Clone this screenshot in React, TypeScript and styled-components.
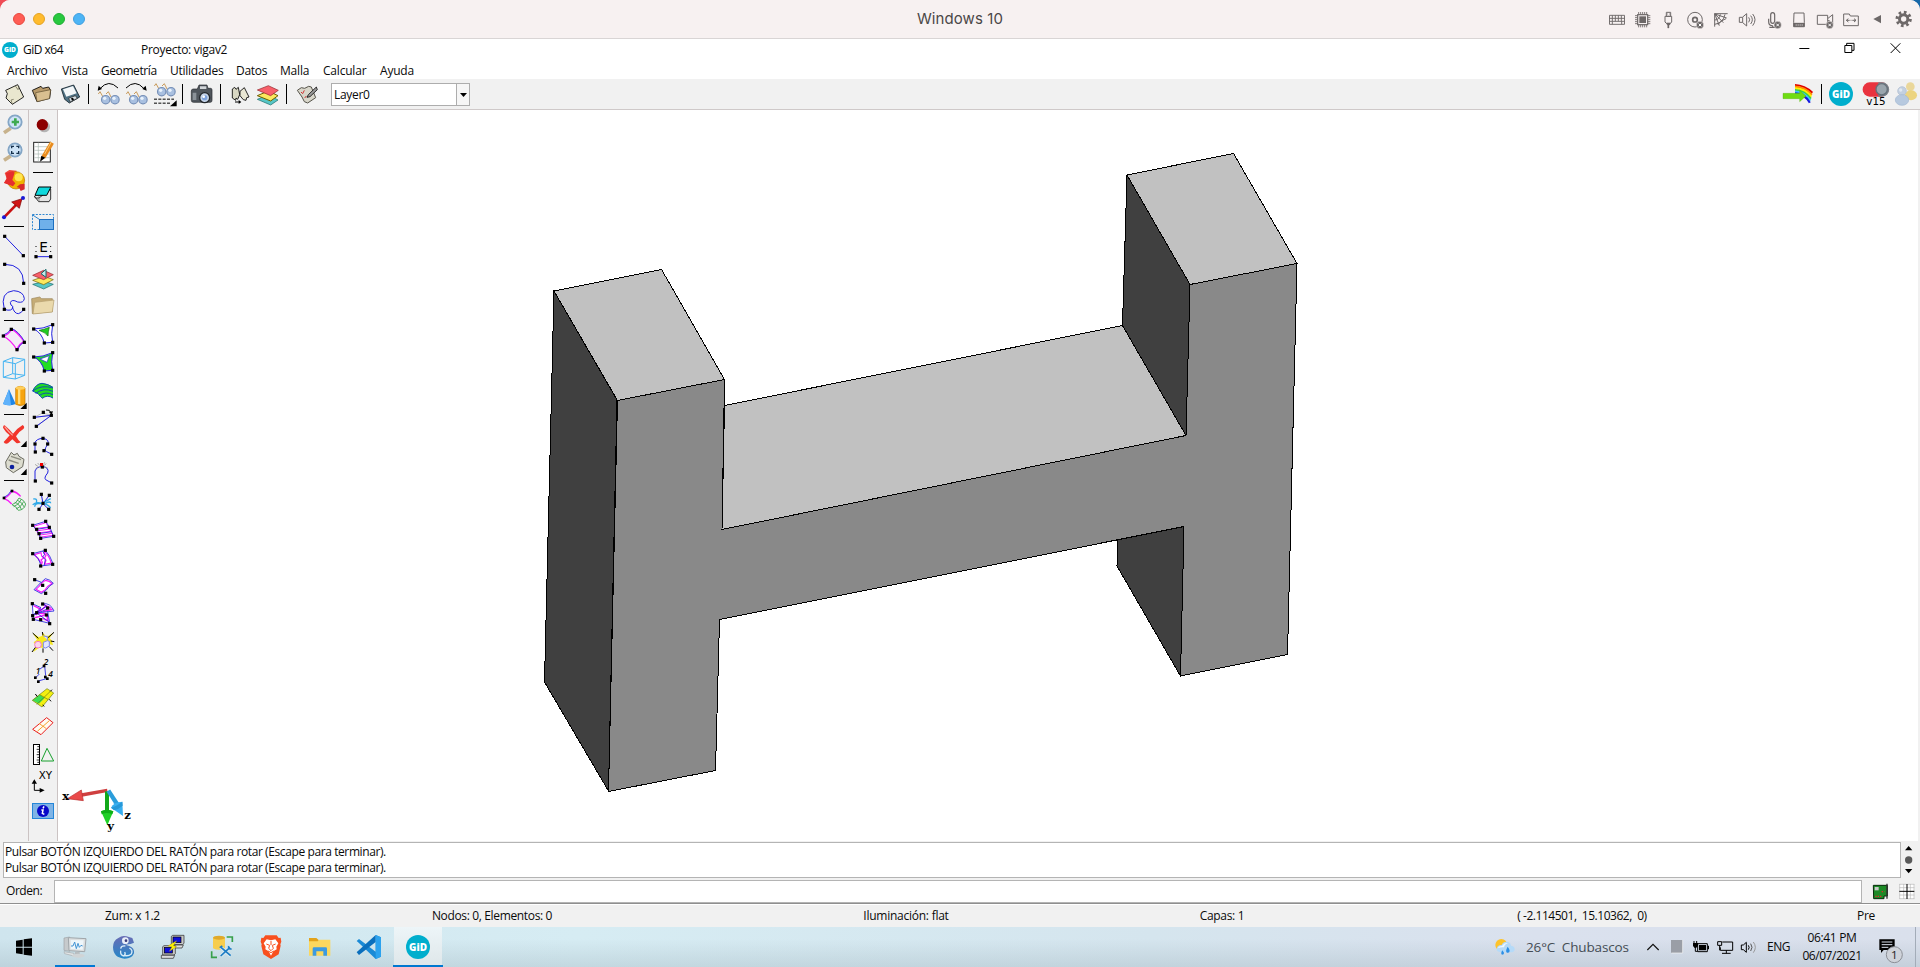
import React from "react";
import styled, { createGlobalStyle } from "styled-components";

const GlobalStyle = createGlobalStyle`
  * { box-sizing: border-box; }
  body { margin: 0; overflow: hidden; background: linear-gradient(90deg, #ef4b55 50%, #1768a8 50%); }
`;

const UI = `"Open Sans", "Noto Sans", sans-serif`;

const Desktop = styled.div`
  display: flex;
  flex-direction: column;
  width: 1920px;
  height: 967px;
  overflow: hidden;
  border-radius: 10px 10px 0 0;
  background: #f1f1f1;
  font: 12px/16px ${UI};
  color: #0a0a0a;
`;

const Label = styled.span<{ $ls?: number }>`
  white-space: pre;
  letter-spacing: ${(p) => p.$ls ?? -0.3}px;
`;

const MacBar = styled.header`
  display: grid;
  grid-template-columns: 1fr auto 1fr;
  align-items: center;
  height: 39px;
  flex: none;
  background: #f7f1f1;
  border-bottom: 1px solid #d9d5d5;
`;
const Lights = styled.div`
  display: flex;
  gap: 8px;
  padding-left: 13px;
`;
const Light = styled.i<{ $c: string; $b: string }>`
  width: 12px;
  height: 12px;
  border-radius: 50%;
  background: ${(p) => p.$c};
  border: 1px solid ${(p) => p.$b};
`;
const MacTitle = styled.div`
  font: 15px/20px Inter, sans-serif;
  color: #4b4747;
  letter-spacing: 0.1px;
  padding-bottom: 1px;
`;
const MacTools = styled.div`
  display: flex;
  justify-content: flex-end;
  padding-right: 4px;
`;

const TitleRow = styled.div`
  display: flex;
  align-items: center;
  height: 22px;
  flex: none;
  background: #fff;
`;
const AppName = styled.div`
  display: flex;
  align-items: center;
  gap: 5px;
  width: 141px;
  padding: 0 0 1px 2px;
`;
const ProjectName = styled.div`
  flex: 1;
`;
const WindowButtons = styled.div`
  display: flex;
  padding-right: 1px;
`;

const MenuRow = styled.nav`
  display: flex;
  height: 18px;
  flex: none;
  padding-left: 7px;
  background: #fff;
  line-height: 19px;
`;
const MenuItem = styled.span<{ $w: number; $ls?: number }>`
  width: ${(p) => p.$w}px;
  letter-spacing: ${(p) => p.$ls ?? -0.2}px;
`;

const Toolbar = styled.div`
  display: flex;
  align-items: center;
  height: 31px;
  flex: none;
  border-bottom: 1px solid #cfc9c9;
`;
const Spacer = styled.div`
  flex: 1;
`;
const Combo = styled.div`
  display: flex;
  width: 139px;
  height: 23px;
  margin: 1px 0 0 9px;
  border: 1px solid #adadad;
  background: #fff;
  line-height: 21px;
`;
const ComboText = styled.div`
  flex: 1;
  padding-left: 2px;
`;
const ComboArrow = styled.div`
  display: flex;
  align-items: center;
  justify-content: center;
  width: 13px;
  border-left: 1px solid #adadad;
  background: #f6f6f6;
`;

const Work = styled.main`
  display: flex;
  height: 731px;
  flex: none;
`;
const ToolColumn = styled.div`
  display: flex;
  flex-direction: column;
  width: 29px;
  border-right: 1px solid #cbc3c3;
`;
const Divider = styled.div<{ $h: number; $top: number }>`
  height: ${(p) => p.$h}px;
  padding: ${(p) => p.$top}px 0 0 4px;
  flex: none;
  &::before {
    content: "";
    display: block;
    width: 20px;
    height: 1px;
    background: #000;
  }
`;
const Viewport = styled.div`
  width: 1860px;
  background: #fff;
`;

const LogRow = styled.div`
  display: flex;
  height: 38px;
  flex: none;
  padding: 1px 0 1px 3px;
`;
const LogBox = styled.div`
  display: flex;
  flex-direction: column;
  width: 1898px;
  height: 36px;
  padding: 1px;
  border: 1px solid #b4b4b4;
  background: #fff;
`;
const CommandRow = styled.div`
  display: flex;
  align-items: center;
  height: 24px;
  flex: none;
`;
const CommandLabel = styled.div`
  width: 54px;
  padding-left: 6px;
`;
const CommandInput = styled.div`
  width: 1808px;
  height: 23px;
  border: 1px solid #b4b4b4;
  background: #fff;
`;
const StatusBar = styled.div`
  display: flex;
  align-items: center;
  height: 24px;
  flex: none;
  border-top: 1px solid #8f8f8f;
  box-shadow: inset 0 1px #fff;
  padding-top: 1px;
`;
const StatusCell = styled.div<{ $w: number }>`
  width: ${(p) => p.$w}px;
  text-align: center;
`;

const Taskbar = styled.footer`
  display: flex;
  height: 40px;
  flex: none;
  background: linear-gradient(180deg, rgba(160, 180, 190, 0) 30%, rgba(150, 170, 180, 0.3)),
    linear-gradient(90deg, #cfe5ee, #d6ecf3 30%, #d5e5ee 60%, #dae1ee 80%, #dae0ec);
`;
const TaskButton = styled.div<{ $w: number; $active?: boolean }>`
  display: flex;
  width: ${(p) => p.$w}px;
  height: 40px;
  background: ${(p) => (p.$active ? "linear-gradient(180deg, #edf5f8, #dfe7ea)" : "none")};
  background-clip: content-box;
  padding: 0 ${(p) => (p.$active ? 1 : 0)}px;
  border-bottom: ${(p) => (p.$active ? "2px solid #0078d0" : "0")};
`;
const Weather = styled.div`
  width: 118px;
  padding-left: 8px;
  font-size: 13.5px;
  line-height: 41px;
  color: #444c54;
`;
const Language = styled.div`
  width: 37px;
  text-align: center;
  line-height: 40px;
`;
const Clock = styled.div`
  display: flex;
  flex-direction: column;
  width: 70px;
  padding-top: 2px;
  text-align: center;
  line-height: 18px;
`;
const DesktopEdge = styled.div`
  width: 5px;
  border-left: 1px solid #a3acb8;
`;

/* Icons are drawn on a grid of three units per pixel. */
type IconProps = { x: number; y: number; w: number; h: number; children?: React.ReactNode };
const Svg = styled.svg`
  display: block;
  flex: none;
`;
const Icon = ({ x, y, w, h, children }: IconProps) => (
  <Svg width={w / 3} height={h / 3} viewBox={`${x} ${y} ${w} ${h}`} fill="none">
    {children}
  </Svg>
);
const Mac = ({ x, children }: { x: number; children: React.ReactNode }) => (
  <Icon x={x} y={0} w={78} h={114}>
    <g stroke="#6d6868" strokeWidth="3.6">{children}</g>
  </Icon>
);
const A = ({ y, children }: { y: number; children: React.ReactNode }) => (
  <Icon x={0} y={y} w={84} h={84}>{children}</Icon>
);
const B = ({ y, children }: { y: number; children: React.ReactNode }) => (
  <Icon x={87} y={y} w={84} h={84}>{children}</Icon>
);
const Dots = ({ p, c = "#000", r = 4.8 }: { p: number[][]; c?: string; r?: number }) => (
  <>
    {p.map(([x, y]) => (
      <rect key={`${x}-${y}`} x={x - r} y={y - r} width={r * 2} height={r * 2} fill={c} />
    ))}
  </>
);
const GidLogo = ({ cx, cy, r, f }: { cx: number; cy: number; r: number; f: number }) => (
  <>
    <circle cx={cx} cy={cy} r={r} fill="#00aecd" />
    <text x={cx} y={cy + f * 0.36} fontSize={f} fontWeight="800" fontFamily="Open Sans, sans-serif" fill="#fff" textAnchor="middle">
      GiD
    </text>
  </>
);
const Glasses = ({ x, y }: { x: number; y: number }) => (
  <g transform={`translate(${x} ${y})`}>
    <path d="M-22-8L-31-24l-5 7M2-8L-6-24l-7 7" stroke="#c89b5c" strokeWidth="3" />
    <circle cx="-14" cy="0" r="12.500" fill="#a9c0e0" stroke="#7690b8" strokeWidth="3.500" />
    <circle cx="14" cy="0" r="12.500" fill="#a9c0e0" stroke="#7690b8" strokeWidth="3.500" />
    <circle cx="-17" cy="-4" r="5" fill="#e9f2fc" />
    <circle cx="11" cy="-4" r="5" fill="#e9f2fc" />
  </g>
);
const BadX = ({ x, y }: { x: number; y: number }) => (
  <>
    <circle cx={x} cy={y} r="11" fill="#6d6868" stroke="#f7f1f1" strokeWidth="1.5" />
    <path d={`M${x - 4} ${y - 4}l8 8m0-8l-8 8`} stroke="#fff" strokeWidth="3" />
  </>
);
const VLine = ({ x }: { x: number }) => <path d={`M${x} 255v60`} stroke="#000" strokeWidth="3" />;

const MacIcons = () => (
  <MacTools>
    <Mac x={492}>
      <path d="M508.500 46h45v27h-45zM508 55h46M508 64h46M517 46v18M526 46v18M535 46v18M544 46v18M517 64v9M545 64v9" strokeWidth="2.800" />
    </Mac>
    <Mac x={570}>
      <rect x="593" y="44" width="30" height="30" />
      <rect x="598" y="49" width="20" height="20" fill="#6d6868" stroke="none" />
      <path d="M596 36v7M602 36v7M608 36v7M614 36v7M620 36v7M596 75v7M602 75v7M608 75v7M614 75v7M620 75v7M585 47h7M585 53h7M585 59h7M585 65h7M585 71h7M624 47h7M624 53h7M624 59h7M624 65h7M624 71h7" strokeWidth="2.600" />
    </Mac>
    <Mac x={648}>
      <path d="M679 37h13v12h-13zM675 49h20v17l-4 4h-12l-4-4z" strokeWidth="3" />
      <path d="M679 69h13l-3 6h-7zM683 74h4v10h-4z" fill="#6d6868" strokeWidth="1" />
      <path d="M682 42h2M688 42h2" />
    </Mac>
    <Mac x={726}>
      <circle cx="765" cy="59" r="22" strokeWidth="3" />
      <circle cx="765" cy="59" r="7" strokeWidth="5" />
      <BadX x={780} y={75} />
    </Mac>
    <Mac x={804}>
      <path d="M824 80V41h39M824 41l26 27M824 41l14 36M825 42l35 12M824 60q14 0 17-17M824 73q26-4 31-30M834 74q6-12 24-18" strokeWidth="3" />
    </Mac>
    <Mac x={882}>
      <path d="M898 52h9l13-11v37l-13-11h-9zM908 52v15M926 52q6 7 0 15M932 47q10 12 0 25M938 42q14 17 0 35" strokeWidth="3" />
    </Mac>
    <Mac x={960}>
      <path d="M992 45q0-7 6-7t6 7v18q0 7-6 7t-6-7zM986 56v9q0 12 12 12M998 77v6M988 82h18" />
      <BadX x={1013} y={75} />
    </Mac>
    <Mac x={1038}>
      <path d="M1061 67l1-28h30l1 28v13h-32z" strokeWidth="3" />
      <path d="M1061 69h32v11h-32z" fill="#6d6868" strokeWidth="1" />
      <path d="M1067 75h3M1073 75h3M1079 75h3M1085 75h3" stroke="#f7f1f1" />
    </Mac>
    <Mac x={1116}>
      <path d="M1132 46h31v27h-31zM1164 55l14-11v28M1164 62h5" strokeWidth="3" />
      <BadX x={1169} y={75} />
    </Mac>
    <Mac x={1194}>
      <path d="M1211 77V42h17l3 6h24v29zM1219 61h10M1237 61h11M1225 56l-6 5 6 5M1242 56l6 5-6 5" strokeWidth="3" />
      <path d="M1232 61h2" />
    </Mac>
    <Mac x={1272}>
      <path d="M1300 57l23-12v25z" fill="#6d6868" stroke="none" />
    </Mac>
    <Mac x={1350}>
      <circle cx="1391" cy="57" r="12.500" strokeWidth="9" />
      <circle cx="1391" cy="57" r="20" strokeWidth="9" strokeDasharray="7.850 7.850" />
    </Mac>
  </MacTools>
);

const TopTools = () => (
  <>
    <Icon x={0} y={240} w={84} h={90}>
      <path d="M17 274L53 257 71 294 37 316 18 297 22 284z" fill="#e9e7cf" stroke="#000" strokeWidth="2.500" />
      <path d="M46 261l8 11 3-10M37 315l-4-12 8-2" stroke="#77755e" strokeWidth="2.500" />
    </Icon>
    <Icon x={84} y={240} w={87} h={90}>
      <path d="M97 274l26-12 5 6 18-4 6 10-3 24-38 10z" fill="#b99b6b" stroke="#000" strokeWidth="2.500" />
      <path d="M107 281l45-9-4 27-37 9z" fill="#d9bf90" stroke="#5b4a2c" strokeWidth="2" />
    </Icon>
    <Icon x={171} y={240} w={87} h={90}>
      <path d="M184 270l37-12 18 36-31 18-14-11z" fill="#4f7183" stroke="#16232b" strokeWidth="2.500" />
      <path d="M189 271l30-10 11 22-31 10z" fill="#f3f7f9" />
      <path d="M206 298l20-8 6 8-21 11z" fill="#d4dde2" stroke="#222" strokeWidth="2" />
      <path d="M213 298l6-2 3 6-6 3z" fill="#000" />
    </Icon>
    <Icon x={258} y={240} w={27} h={90}><VLine x={265.500} /></Icon>
    <Icon x={285} y={240} w={84} h={90}>
      <path d="M300 269q26-30 54-2" stroke="#000" strokeWidth="3" />
      <path d="M293 275l3-15 10 10z" fill="#000" />
      <Glasses x={331} y={302} />
    </Icon>
    <Icon x={369} y={240} w={84} h={90}>
      <path d="M378 267q28-28 54 2" stroke="#000" strokeWidth="3" />
      <path d="M440 275l-3-15-10 10z" fill="#000" />
      <Glasses x={415} y={302} />
    </Icon>
    <Icon x={453} y={240} w={84} h={90}>
      <Glasses x={499} y={278} />
      <path d="M462 300.500h60M462 312.500h48" stroke="#000" strokeWidth="3" strokeDasharray="9 4" />
      <path d="M530 304v18h-20z" fill="#000" />
    </Icon>
    <Icon x={537} y={240} w={27} h={90}><VLine x={547.500} /></Icon>
    <Icon x={564} y={240} w={84} h={90}>
      <path d="M574 276q0-6 6-6h12l5-12h24l3 10h8q4 0 4 5v31q0 6-5 6h-51q-6 0-6-6z" fill="#50565c" stroke="#25292d" strokeWidth="2" />
      <path d="M600 262h19v8h-19z" fill="#d1d5d8" />
      <path d="M578 281h11v22h-11z" fill="#8b9298" />
      <circle cx="614" cy="296" r="15" fill="#c5d4e8" stroke="#22262a" strokeWidth="4" />
      <circle cx="614" cy="296" r="8" fill="#7fa3dc" />
      <circle cx="611" cy="293" r="4" fill="#fff" />
    </Icon>
    <Icon x={648} y={240} w={33} h={90}><VLine x={661.500} /></Icon>
    <Icon x={681} y={240} w={84} h={90}>
      <path d="M697 270l7-5 4 6 7-6 4 22-6 14-5-4-1 7-10-7z" fill="#d9d8c4" stroke="#000" strokeWidth="2.500" />
      <path d="M720 277l13-11 14 28-7 2-2 8-8-2-10-12z" fill="#e9e7d3" stroke="#000" strokeWidth="2.500" />
      <path d="M705 309h14" stroke="#000" strokeWidth="3" />
      <path d="M716 303l8 6-8 6z" fill="#000" />
    </Icon>
    <Icon x={765} y={240} w={84} h={90}>
      <path d="M772 301l33-14 29 16-22 15z" fill="#56c6c6" stroke="#176868" strokeWidth="2" />
      <path d="M772 290l33-14 29 14-22 16z" fill="#fbe85e" stroke="#6d5e00" strokeWidth="3" />
      <path d="M772 273l33-13 30 14-23 16z" fill="#f8606a" stroke="#8f2228" strokeWidth="2" />
    </Icon>
    <Icon x={849} y={240} w={33} h={90}><VLine x={859.500} /></Icon>
    <Icon x={882} y={240} w={84} h={90}>
      <path d="M892 274l12-8 10 2 12-6 8 2 13 32-24 16-10-4-7-14z" fill="#d8d6ca" stroke="#55534a" strokeWidth="3" />
      <path d="M903 279l5 5 5-10M914 297l5-6" stroke="#d23333" strokeWidth="3" />
      <path d="M949 264l-24 23-4 8 9-2 22-21z" fill="#999" stroke="#111" strokeWidth="2.500" />
    </Icon>
  </>
);

const TopRightTools = () => (
  <>
    <Icon x={1020} y={240} w={108} h={90}>
      {["#e00000", "#ff8a00", "#ffee00", "#3ed33e", "#3bc4ff", "#1818e0"].map((c, i) => (
        <path key={c} d={`M${1065} ${258 + i * 5}Q${1094} ${259 + i * 5} ${1117 - i * 1.5} ${281 + i * 6}`} stroke={c} strokeWidth="6.500" />
      ))}
      <path d="M1029 283h50v-9l19 17-19 17v-9h-50z" fill="#6fdc12" stroke="#4fae08" strokeWidth="1" />
    </Icon>
    <Icon x={1128} y={240} w={33} h={90}><VLine x={1144.500} /></Icon>
    <Icon x={1161} y={240} w={90} h={90}><GidLogo cx={1203} cy={285} r={36} f={30} /></Icon>
    <Icon x={1251} y={240} w={102} h={90}>
      <rect x="1268" y="250" width="78" height="43" rx="21" fill="#e9343f" />
      <path d="M1315 250h12a20 21 0 0 1 0 43h-12z" fill="#79838b" />
      <circle cx="1325" cy="271" r="17" fill="#9aa5ad" stroke="#66717a" strokeWidth="4" />
      <text x="1308" y="319" fontSize="31" fontFamily="DejaVu Sans, sans-serif" fill="#000" textAnchor="middle">v15</text>
    </Icon>
    <Icon x={1353} y={240} w={87} h={90}>
      <circle cx="1411" cy="263" r="13" fill="#ead79a" />
      <ellipse cx="1413" cy="289" rx="18" ry="15" fill="#ecd480" />
      <circle cx="1386" cy="276" r="13" fill="#c3d0e0" stroke="#aebdd0" strokeWidth="2" />
      <ellipse cx="1386" cy="303" rx="20" ry="16" fill="#b7c9df" stroke="#a3b8d2" strokeWidth="2" />
      <circle cx="1382" cy="273" r="5" fill="#e2e9f1" />
    </Icon>
  </>
);

const blue = "#2222e0";
const mag = "#f71cf7";

const LeftColumn = () => (
  <ToolColumn>
    <A y={15}>
      <path d="M12 83l20-13" stroke="#c7b28c" strokeWidth="11" />
      <circle cx="45" cy="51" r="20" fill="#cfe4f7" stroke="#84a6c6" strokeWidth="5.500" />
      <path d="M46 40v22M35 51h22" stroke="#3faa50" strokeWidth="8" />
    </A>
    <A y={99}>
      <path d="M12 166l20-13" stroke="#c7b28c" strokeWidth="11" />
      <circle cx="45" cy="135" r="20" fill="#cfe4f7" stroke="#84a6c6" strokeWidth="5.500" />
      <path d="M35 130v-6h7M49 124h7v6M56 138v7h-7M42 145h-7v-7" stroke="#17324d" strokeWidth="4" />
    </A>
    <A y={183}>
      <path d="M14 204l14-9 22 2-12 40-26-3 8-14z" fill="#f04a3e" />
      <circle cx="48" cy="226" r="26" fill="#f0b400" stroke="#b87800" strokeWidth="2" />
      <circle cx="56" cy="217" r="12" fill="#ffe650" />
      <path d="M18 204l20-5 6 4-7 22 9 10-7 9-17-6-10-4 8-12z" fill="#e62e2e" />
      <path d="M50 246l10-8 14-2v17l-12 5-4-9z" fill="#d82a2a" />
    </A>
    <A y={267}>
      <path d="M12 337L52 296" stroke="#c80f0f" strokeWidth="8" />
      <path d="M66 281l-8 29-23-19z" fill="#d01414" stroke="#7c0000" strokeWidth="2" />
      <circle cx="12" cy="337" r="6" fill="#1a1ad8" />
      <circle cx="69" cy="279" r="6" fill="#1a1ad8" />
    </A>
    <Divider $h={10} $top={4} />
    <A y={381}>
      <path d="M14 394L70 452" stroke={blue} strokeWidth="3" />
      <Dots p={[[14, 394], [70, 452]]} />
    </A>
    <A y={465}>
      <path d="M14 478q56 0 57 57" stroke={blue} strokeWidth="3" />
      <Dots p={[[14, 478], [71, 535]]} />
    </A>
    <A y={549}>
      <path d="M13 613q-14-52 28-56 30 2 32 24-2 14-20 10-18-10-22 2 0 8 8 12-2 16-26 8M37 606q6 20 18 20 10-2 16-13" stroke={blue} strokeWidth="3" />
      <Dots p={[[13, 613], [71, 613]]} />
    </A>
    <Divider $h={10} $top={4} />
    <A y={48}>
      <path d="M10 78q15-4 25-20 18 8 38 38-16 4-22 24-16-28-41-42z" fill="#f3ebf7" stroke={mag} strokeWidth="4" />
      <path d="M10 75q15-4 24-20M75 97q-16 3-22 24M34 55q22 8 41 42" stroke={blue} strokeWidth="2.500" />
      <Dots p={[[10, 78], [34, 58], [73, 97], [51, 119]]} />
    </A>
    <A y={132}>
      <path d="M10 154l28-11 36 5v48l-28 11-36-5zM10 154l36 7 28-13M46 161v46M38 143v48l36 5M38 191l-28 11" stroke="#45b4f2" strokeWidth="3" />
    </A>
    <A y={216}>
      <path d="M9 282l18-44 20 44q-20 8-38 0z" fill="#1f86e6" />
      <path d="M27 238l6 48q-12 1-24-4z" fill="#5fb2fb" />
      <path d="M47 234q14-10 28 0v49q-14 8-28 0z" fill="#f7a410" stroke="#c27b00" strokeWidth="2" />
      <path d="M54 236h7v46h-7z" fill="#ffdd7c" />
      <ellipse cx="61" cy="234" rx="14" ry="5" fill="#ffcf5c" />
      <path d="M80 278v19H61z" fill="#000" />
    </A>
    <Divider $h={10} $top={4} />
    <A y={330}>
      <path d="M14 346q16 14 25 25 12-16 29-26 8 6 2 12-14 8-22 22 8 14 14 18-8 4-13 2l-12-11-13 12q-10 3-13-4 8-8 18-20-14-12-20-23 0-7 5-7z" fill="#f2352b" />
      <path d="M14 350q12 16 24 26" stroke="#fca79f" strokeWidth="3.500" />
      <path d="M80 392v19H62z" fill="#000" />
    </A>
    <A y={414}>
      <path d="M17 456l17-29 8 8 10-5 5 9 15 9-4 22-28 18-21-15z" fill="#dcdccf" stroke="#6a6a60" strokeWidth="3" />
      <path d="M33 439l30 10M26 450l30 10" stroke="#8c8c80" strokeWidth="4" />
      <circle cx="36" cy="471" r="7" fill="#0b1f9e" />
      <path d="M80 476v19H62z" fill="#000" />
    </A>
    <Divider $h={10} $top={4} />
    <A y={528}>
      <path d="M12 564l23-21 27 16-18 16z" fill="#f6ecf6" />
      <path d="M12 565q14-5 24-22 16 4 26 16M13 566q12 4 22 16" stroke={mag} strokeWidth="4" />
      <path d="M12 562q14-5 22-21" stroke={blue} strokeWidth="2.500" />
      <path d="M36 584q12-2 21-20 16 6 20 18-4 18-22 19-6-12-19-17zM44 577q14 4 20 21M51 570q16 6 22 22M41 590q14-4 23-22M48 597q14-4 23-22" stroke="#35a046" strokeWidth="2.500" />
      <Dots p={[[12, 564], [36, 543]]} r={4} />
    </A>
  </ToolColumn>
);

const RightColumn = () => (
  <ToolColumn>
    <B y={15}>
      <circle cx="133" cy="65" r="17" fill="#b4b4b4" />
      <circle cx="127" cy="59" r="17" fill="#8c0000" />
    </B>
    <B y={99}>
      <rect x="101" y="112" width="50" height="59" fill="#fff" stroke="#222" strokeWidth="3" />
      <path d="M103 125h46M103 136h46M103 147h46M103 158h46M115 113v57" stroke="#a9b8b0" strokeWidth="2" />
      <path d="M130 157l26-44" stroke="#e88b1e" strokeWidth="13" />
      <path d="M124 152l12 6-16 12z" fill="#000" />
      <path d="M134 147l20-36" stroke="#ffc870" strokeWidth="3" />
    </B>
    <Divider $h={14} $top={6} />
    <B y={225}>
      <path d="M103 273l3 6h11l35-27v30l-5 8h-31z" fill="#e4e4e4" stroke="#333" strokeWidth="3" />
      <path d="M116 246h37l-13 25h-35z" fill="#10d8dc" stroke="#000" strokeWidth="3" />
      <path d="M117 273v15" stroke="#666" strokeWidth="2" />
    </B>
    <B y={309}>
      <rect x="97.500" y="328.500" width="63" height="45" stroke="#2e86d0" strokeWidth="3" strokeDasharray="6 4" />
      <path d="M98 330l20 13" stroke="#2e86d0" strokeWidth="3" />
      <rect x="118.500" y="343.500" width="42" height="30" fill="#6fb0ea" stroke="#1d6fc0" strokeWidth="3" />
    </B>
    <B y={393}>
      <text x="131" y="440" fontSize="41" fontFamily="DejaVu Sans, sans-serif" fill="#000" textAnchor="middle">E</text>
      <path d="M108 455h44" stroke={blue} strokeWidth="3" />
      <Dots p={[[108, 455], [152, 455]]} />
      <path d="M108 423v3M108 438v3M152 423v3M152 438v3" stroke="#000" strokeWidth="3" />
    </B>
    <B y={477}>
      <path d="M98 538l35-9 27 9-29 14z" fill="#56c6c6" stroke="#176868" strokeWidth="2" />
      <path d="M98 526l35-12 27 10-29 15z" fill="#fbe85e" stroke="#6d5e00" strokeWidth="2" />
      <path d="M98 511l33-15 29 13-29 15z" fill="#f8606a" stroke="#8f2228" strokeWidth="2" />
      <path d="M123 506l15-13v24z" fill="#c3eaea" stroke="#126868" strokeWidth="3" />
    </B>
    <B y={561}>
      <path d="M95 581l24-5 6 5h32v39l-60 6z" fill="#c5ac76" stroke="#9a8355" strokeWidth="2" />
      <path d="M104 592l58-7-5 36-58 6z" fill="#ead9ac" stroke="#b49d6c" strokeWidth="2" />
    </B>
    <B y={30}>
      <path d="M101 57q28 0 57-13-6 28 0 53l-25 2q-8-32-32-42z" fill="#fff" stroke={blue} strokeWidth="3" />
      <path d="M117 61q14-2 31-9-4 14-4 26-10-12-27-17z" fill="#22cc22" stroke="#0a6d0a" strokeWidth="2" />
      <Dots p={[[101, 57], [158, 44], [158, 97], [133, 99]]} />
    </B>
    <B y={114}>
      <path d="M101 141q28 0 57-13-6 28 0 53l-25 2q-8-32-32-42z" fill="#22dd22" stroke={blue} strokeWidth="3" />
      <path d="M120 147l28-10-7 20z" fill="#fff" stroke={blue} strokeWidth="2" />
      <Dots p={[[101, 141], [158, 128], [158, 181], [133, 183]]} />
    </B>
    <B y={198}>
      <path d="M98 243q8-20 26-23 20 0 35 12v33q-14-12-32 0-8-14-29-22z" fill="#22dd22" />
      <path d="M98 243q26-20 61-9M107 250q24-18 52-6M117 257q20-14 42-3M98 243q10-22 28-23 18 2 33 12M127 265q14-12 32-1M127 265q-10-16-29-22" stroke="#1250b0" strokeWidth="3" />
    </B>
    <B y={282}>
      <path d="M103 322l51-6-45 33M129 309l25 7M103 322l26-14" stroke="#aaa" strokeWidth="2" />
      <path d="M103 322l51-6M109 349l45-33" stroke={blue} strokeWidth="3" />
      <path d="M138 300q12-2 15 8" stroke="#000" strokeWidth="3" />
      <path d="M146 305l13-1-4 10z" fill="#000" />
      <Dots p={[[103, 322], [109, 349], [154, 316], [130, 307]]} />
    </B>
    <B y={366}>
      <path d="M105 428v-30q4-12 24-13 22 4 13 20-12 16-2 20l16 8" stroke={blue} strokeWidth="3" />
      <Dots p={[[106, 426], [105, 402], [129, 385], [143, 402], [132, 422], [155, 433]]} />
    </B>
    <B y={450}>
      <path d="M105 513v-30q4-12 22-14 22 4 16 20-12 14-6 20l18 10" stroke={blue} strokeWidth="3" />
      <path d="M105 463l10 7M107 475l9-4M139 461l-8 6M143 474l-10-3M113 459l6 7M134 457l-4 7" stroke="#888" strokeWidth="2" />
      <Dots p={[[106, 513], [127, 471], [155, 519]]} />
      <rect x="120" y="459" width="9" height="9" fill="#e00" />
    </B>
    <B y={534}>
      <path d="M124 553l5 28-12 17M148 556l-19 25 17 17" stroke={blue} strokeWidth="3" />
      <path d="M100 567q10-2 10 6-4 8 18 8 12 0 24 12M98 584q12-10 28-4l26-14M104 590q0-12 22-10M136 580q16-8 16 0" stroke="#2fa9e8" strokeWidth="4" />
      <Dots p={[[124, 553], [148, 556], [129, 580], [117, 598], [146, 598]]} />
    </B>
    <B y={3}>
      <path d="M98 31l39-12 14 20 11 28-39 3-12-24z" fill="#fff" />
      <path d="M101 34l34-10M112 40l34-4M114 47l36-5M120 53l34-4M120 60l36-5M125 66l34-5M137 22l22 39M102 34l20 34" stroke={mag} strokeWidth="3" />
      <path d="M98 31l39-12q15 18 24 45l-39 6q-6-22-24-39zM110 43l38-6M117 56l39-6" stroke={blue} strokeWidth="2.500" />
      <Dots p={[[98, 31], [137, 19], [148, 37], [161, 64], [122, 70], [110, 43], [117, 56]]} />
    </B>
    <B y={87}>
      <path d="M98 116l38-10q14 14 24 42l-37 5q-6-26-25-37z" fill="#fff" />
      <path d="M103 119l20-6 2 10 6 6-8 6 4 6-2 6q-8-18-22-28zM134 110q12 10 20 34l-20 4 4-12-4-8 4-6-6-6z" stroke={mag} strokeWidth="3.500" />
      <path d="M98 116l38-10q14 14 24 42l-37 5q-6-26-25-37zM128 108l6 10-6 8 8 8-4 18" stroke={blue} strokeWidth="2.500" />
      <Dots p={[[98, 116], [136, 106], [158, 148], [122, 153]]} />
    </B>
    <B y={171}>
      <path d="M124 201l10-9q16 2 26 14-16 6-22 20l-14 10-22-12q14-12 22-23z" fill="#fff" />
      <path d="M126 203l10-7q14 2 20 10-14 6-20 18l-12 8-16-9q12-10 18-20z" stroke={mag} strokeWidth="3.500" />
      <path d="M104 194l20 8 12-11q14 2 24 14-12 6-22 21l-14 10-22-12 21-22" stroke={blue} strokeWidth="2.500" />
      <Dots p={[[104, 194], [128, 211], [137, 235]]} />
    </B>
    <B y={255}>
      <path d="M97 266l26 12 18-14q16 6 22 24l-20 2 6 34-27-14-22 3z" fill="#fff" />
      <path d="M101 272l20 10-14 18 30-26M130 268l24 12M105 294l34 2M128 290l30-7M104 308l30-7M128 310l16 8-4-20" stroke={mag} strokeWidth="4.500" />
      <path d="M97 266l26 12-26 24 49-22-16-14q22-2 32 22l-52 6 39 28M97 266l3 47 49 12-6-36M110 293l30-20" stroke={blue} strokeWidth="2.500" />
      <Dots p={[[97, 266], [128, 267], [143, 279], [110, 293], [139, 300], [100, 313], [149, 326], [122, 314], [98, 302]]} />
    </B>
    <B y={339}>
      <path d="M98 354l18 12 10-3 2-11 8 10 10 0 15-10-12 18 6 6 4 14-16-4-12 12-14 0-18 14 10-18-8-12 10-8z" fill="#f7e81e" />
      <path d="M98 354l17 16M162 352l-18 16M127 351l2 10M96 411l12-16M159 407l-11-12M129 413v-13M152 378l11 2" stroke="#000" strokeWidth="3" />
      <circle cx="114" cy="389" r="10" fill="#fbd5ec" stroke="#f47ac0" strokeWidth="3" />
      <path d="M130 382l12-5 6 2v14l-11 6-7-2zM130 363l12 2v10" fill="#e1e5ff" stroke="#7a86f0" strokeWidth="3" />
    </B>
    <B y={423}>
      <path d="M106 489l12-12M120 462l14-10 3 30M115 498l28-8" stroke={blue} strokeWidth="2.500" />
      <g fontFamily="Open Sans, sans-serif" fontStyle="italic" fontWeight="600" fill="#000" fontSize="25">
        <text x="131" y="450">2</text>
        <text x="107" y="476">1</text>
        <text x="145" y="486">4</text>
      </g>
      <Dots p={[[106, 488], [132, 453], [136, 486], [115, 500], [142, 491]]} r={4} />
    </B>
    <B y={42}>
      <path d="M97 91l44-35 20 13-35 42z" fill="#f3ef10" />
      <path d="M97 91l22-17 15 10-17 17z" fill="#3bdd55" />
      <path d="M97 91l44-35 20 13-35 42zM119 74l26 15M110 103l41-39" stroke="#6a7a10" strokeWidth="2" />
      <path d="M106 72l6 8M148 88l5 6M128 105l5 4M151 64l5-5" stroke="#000" strokeWidth="3" />
    </B>
    <B y={126}>
      <path d="M98 178l42-35 19 15-36 36z" fill="#fffaf2" stroke="#e81c1c" strokeWidth="3" />
      <path d="M112 184l36-32M117 160l22 16" stroke="#f7a030" strokeWidth="3" />
    </B>
    <B y={210}>
      <rect x="100.500" y="223.500" width="18" height="60" fill="#fff" stroke="#000" strokeWidth="3" />
      <path d="M112 230h6M110 238h8M112 246h6M110 254h8M112 262h6M110 270h8M112 277h6" stroke="#000" strokeWidth="2.500" />
      <path d="M124 273h37l-20-38z" stroke="#16a02c" strokeWidth="3" />
    </B>
    <B y={294}>
      <text x="116" y="327" fontSize="31" fontFamily="DejaVu Sans, sans-serif" fill="#000">XY</text>
      <path d="M103 361v-25M103 361h22" stroke="#000" strokeWidth="3" />
      <path d="M95 341l8-13 8 13zM119 354l15 7-15 7z" fill="#000" />
    </B>
    <B y={378}>
      <rect x="97.500" y="400.500" width="63" height="45" fill="#7fb4e6" stroke="#2586d8" strokeWidth="3" />
      <circle cx="129" cy="423" r="18" fill="#0808c8" />
      <path d="M132 409l-3 6M124 420h5l-2 10 6 3" stroke="#fff" strokeWidth="4.500" />
    </B>
  </ToolColumn>
);

const faces = [
  { c: "#404040", p: "554,291 617,400 608.500,791 544.500,682" },
  { c: "#c1c1c1", p: "554,291 661.500,269.500 724.500,379.500 617.500,400.500" },
  { c: "#c1c1c1", p: "724.500,405.500 1122.500,325.500 1186,435.500 722,529.500" },
  { c: "#404040", p: "1127,175 1190,284.500 1186,435.500 1122.500,325.500" },
  { c: "#c1c1c1", p: "1127,175 1233.500,153.500 1297,263.500 1190,284.500" },
  { c: "#404040", p: "1117.500,539 1184,526.500 1180.500,676 1117,566" },
  {
    c: "#898989",
    p: "617.500,400.500 724.500,379.500 722,529.500 1186,435.500 1190,284.500 1297,263.500 1287.500,654.500 1180.500,676 1184,526.500 719.500,619.500 715.500,770.500 608.500,791.500",
  },
];

const Scene = () => (
  <Svg width="1860" height="731" viewBox="58 110 1860 731">
    <g stroke="#000" strokeWidth="1" shapeRendering="crispEdges">
      {faces.map((f) => (
        <polygon key={f.p} points={f.p} fill={f.c} />
      ))}
    </g>
    <g transform="translate(0 670) scale(0.333333)">
      <path d="M322 361L245 375" stroke="#cf3f3f" strokeWidth="10" />
      <path d="M202 386l42-26 6 32z" fill="#ea4a4a" stroke="#b82f2f" strokeWidth="2" />
      <path d="M321 364v58" stroke="#12a81a" strokeWidth="12" />
      <path d="M325 362l28 43" stroke="#2b9ddb" strokeWidth="13" />
      <path d="M303 424q17-10 37 0l-18 42z" fill="#1fd026" />
      <path d="M303 424q18-9 37 0l-3 9q-16-8-32 0z" fill="#0fae16" />
      <path d="M333 413q8-18 34-18l2 43z" fill="#38aef0" />
      <path d="M333 413q14-3 34-18l1 12q-14 12-26 14z" fill="#2798d8" />
      <g fontFamily="DejaVu Serif, serif" fontWeight="bold" fontSize="35" fill="#000">
        <text x="187" y="389">x</text>
        <text x="322" y="481">y</text>
        <text x="373" y="446">z</text>
      </g>
    </g>
  </Svg>
);

const Pc = ({ x, y }: { x: number; y: number }) => (
  <g transform={`translate(${x} ${y})`}>
    <path d="M0 2l4-3h34v24l-4 4H0z" fill="#c8c8c8" stroke="#222" strokeWidth="2" />
    <rect x="5" y="4" width="24" height="17" fill="#1010d8" stroke="#000" strokeWidth="2" />
    <path d="M-4 28h40l-4 9H-4z" fill="#ddd" stroke="#222" strokeWidth="2" />
  </g>
);

const TaskIcons = () => (
  <>
    <TaskButton $w={50}>
      <Icon x={0} y={261} w={150} h={120}>
        <path d="M48 302l20-3v21H48zM71 298l25-3v25H71zM48 323h20v20l-20-3zM71 323h25v24l-25-3z" fill="#000" />
      </Icon>
    </TaskButton>
    <TaskButton $w={49}>
      <Icon x={150} y={261} w={147} h={120}>
        <path d="M192 294l17-3v43l-17-3z" fill="#c6cacc" stroke="#9da2a5" strokeWidth="2" />
        <path d="M192 335l30 5v8l-28-7z" fill="#e2e5e6" stroke="#a4a9ac" strokeWidth="2" />
        <path d="M205 293l53 3-4 39-47-3z" fill="#dcdfe0" stroke="#a0a6aa" strokeWidth="3" />
        <path d="M212 300l39 1-3 28-36-2z" fill="#eef6fa" />
        <path d="M213 318h6l5-12 5 20 5-16 4 12 5-6 5 2" stroke="#4193d4" strokeWidth="3" />
        <path d="M225 336h14v9h-14z" fill="#b8bdc0" />
        <ellipse cx="235" cy="347" rx="19" ry="6" fill="#d0d4d6" />
        <path d="M165 375h120v6H165z" fill="#0078d4" />
      </Icon>
    </TaskButton>
    <TaskButton $w={49}>
      <Icon x={297} y={261} w={147} h={120}>
        <defs>
          <linearGradient id="cham" x1="0" y1="0" x2="0" y2="1">
            <stop offset="0" stopColor="#6a6cb4" />
            <stop offset="1" stopColor="#2487c8" />
          </linearGradient>
        </defs>
        <path d="M339 322q0-20 16-28 12-9 24-5l18 5 5 14-10 4-16 2 12 4q16 6 14 22-6 16-28 16-34-2-35-34z" fill="url(#cham)" />
        <path d="M362 326q2-10 14-8M388 324q12 6 6 18-10 8-20 4M362 332q-2 14 10 16 6-6 2-12" stroke="#d8ebf7" strokeWidth="4" />
        <circle cx="376" cy="302" r="10" fill="#e8eef8" />
        <circle cx="378" cy="302" r="4" fill="#3b3b7a" />
      </Icon>
    </TaskButton>
    <TaskButton $w={49}>
      <Icon x={444} y={261} w={147} h={120}>
        <Pc x={514} y={287} />
        <Pc x={488} y={318} />
        <path d="M530 302l-26 16 12 2-8 14 22-14-10-3z" fill="#fff100" stroke="#a89c00" strokeWidth="1" />
      </Icon>
    </TaskButton>
    <TaskButton $w={49}>
      <Icon x={591} y={261} w={147} h={120}>
        <path d="M680 291h17v15M635 334v18h16" stroke="#37a04a" strokeWidth="5" />
        <path d="M639 293q18-9 36 0v32q-18 9-36 0z" fill="#f7cd4c" />
        <ellipse cx="657" cy="293" rx="18" ry="6" fill="#e0a92a" />
        <path d="M662 322l30 26M692 320l-30 28" stroke="#d7e9f0" strokeWidth="10" />
        <path d="M663 322l29 25M690 322l-28 26" stroke="#1c7cc4" strokeWidth="5" />
        <path d="M686 318q-2 10 9 9M659 323l8-5" stroke="#1c7cc4" strokeWidth="5" />
      </Icon>
    </TaskButton>
    <TaskButton $w={49}>
      <Icon x={738} y={261} w={147} h={120}>
        <path d="M796 286h34l6 8 6-1 2 12-3 8 1 4-6 26-23 14-23-14-6-26 1-4-3-8 2-12 6 1z" fill="#f8501f" />
        <path d="M800 298l13 3 13-3 9 12-6 10 1 8-10 6-7 13-7-13-10-6 1-8-6-10z" fill="#fff" />
        <path d="M799 312l10 4-3 9 7 7 7-7-3-9 10-4M813 303v12M805 333l8 5 8-5" stroke="#f8501f" strokeWidth="3" />
      </Icon>
    </TaskButton>
    <TaskButton $w={49}>
      <Icon x={885} y={261} w={147} h={120}>
        <path d="M927 294h22l7 6v6h-29z" fill="#e3a21a" />
        <path d="M927 304h26l5-5h33v48h-64z" fill="#fbd75e" />
        <path d="M938 347v-21q0-4 4-4h35q4 0 4 4v21h-11v-13h-21v13z" fill="#3c9ae0" />
      </Icon>
    </TaskButton>
    <TaskButton $w={49}>
      <Icon x={1032} y={261} w={147} h={120}>
        <path d="M1127 285l16 7v58l-16 7-51-49-6-5 7-6 50 38z" fill="#1a8ad6" />
        <path d="M1070 337l7 8 50-39v-21l-54 49z" fill="#0a6fbd" />
        <path d="M1127 285l16 7v58l-16 7z" fill="#2ba2ee" />
      </Icon>
    </TaskButton>
    <TaskButton $w={50} $active>
      <Icon x={1182} y={261} w={144} h={114}><GidLogo cx={1254} cy={321} r={36} f={30} /></Icon>
    </TaskButton>
  </>
);

const Tray = () => (
  <>
    <Icon x={160} y={291} w={75} h={120}>
      <circle cx="185" cy="345" r="18" fill="#fdc32c" />
      <path d="M180 366q-12-3-8-13 3-9 14-8 6-13 20-9 8 4 8 11 12 1 11 12-2 8-12 8z" fill="#b5daf8" />
      <path d="M174 355q4-8 13-7 8-12 18-8-10 2-12 12-8-2-19 3z" fill="#eef7fe" />
      <path d="M204 350q-8 14-2 18 8 2 8-6 0-4-6-12zM188 361q-6 10-1 13 7 0 6-6z" fill="#2b8fe6" />
    </Icon>
    <Weather><Label $ls={-0.15}>26°C  Chubascos</Label></Weather>
    <Icon x={588} y={291} w={87} h={120}><path d="M622 360l17-17 17 17" stroke="#111" strokeWidth="3.500" /></Icon>
    <Icon x={675} y={291} w={69} h={120}>
      <rect x="693" y="330" width="35" height="39" fill="#9a9ea6" />
      <path d="M694 369h34v-39" stroke="#f7f7f7" strokeWidth="2" />
    </Icon>
    <Icon x={744} y={291} w={75} h={120}>
      <path d="M773 341h29v24h-29z" stroke="#000" strokeWidth="3" />
      <path d="M777 345h21v16h-21zM803 347h4v11h-4zM759 339h15v9l-6 6h-4l-5-6z" fill="#000" />
      <path d="M762 333v6M770 333v6M766 352v12h7" stroke="#000" strokeWidth="3" />
    </Icon>
    <Icon x={819} y={291} w={72} h={120}>
      <path d="M847 336h31v25h-37v-9M833 335h12v11h-12zM839 346v15M859 361v9M846 370h26" stroke="#000" strokeWidth="3" />
    </Icon>
    <Icon x={891} y={291} w={69} h={120}>
      <path d="M904 345h6l9-8v30l-9-8h-6zM925 346q5 6 0 13" stroke="#000" strokeWidth="3" />
      <path d="M932 341q8 11 0 22" stroke="#555" strokeWidth="3" />
      <path d="M940 336q12 16 0 32" stroke="#999" strokeWidth="3" />
    </Icon>
    <Language><Label $ls={-0.4}>ENG</Label></Language>
    <Clock>
      <Label $ls={-0.35}>06:41 PM</Label>
      <Label $ls={-0.45}>06/07/2021</Label>
    </Clock>
    <Icon x={1281} y={291} w={144} h={120}>
      <path d="M1318 328h46v32h-33l-8 9v-9h-5z" fill="#000" />
      <path d="M1325 336h32M1325 344h32M1325 352h20" stroke="#d9e0ec" strokeWidth="3" />
      <circle cx="1363" cy="374" r="24" fill="#cfd3da" stroke="#8b8f96" strokeWidth="3" />
      <text x="1363" y="386" fontSize="35" fontFamily="Open Sans, sans-serif" fill="#222" textAnchor="middle">1</text>
    </Icon>
  </>
);

const message = "Pulsar BOTÓN IZQUIERDO DEL RATÓN para rotar (Escape para terminar).";

export default function App() {
  return (
    <>
      <GlobalStyle />
      <Desktop>
        <MacBar>
          <Lights>
            <Light $c="#ff5d55" $b="#e8483f" />
            <Light $c="#ffbb2e" $b="#e5a323" />
            <Light $c="#28c83f" $b="#1fae33" />
            <Light $c="#4db4f5" $b="#3f9fe0" />
          </Lights>
          <MacTitle>Windows 10</MacTitle>
          <MacIcons />
        </MacBar>
        <TitleRow>
          <AppName>
            <Icon x={6} y={122} w={48} h={48}><GidLogo cx={30} cy={146} r={24} f={20} /></Icon>
            <Label $ls={-0.5}>GiD x64</Label>
          </AppName>
          <ProjectName><Label $ls={-0.28}>Proyecto: vigav2</Label></ProjectName>
          <WindowButtons>
            <Icon x={1022} y={117} w={138} h={66}><path d="M1077 145.500h30" stroke="#000" strokeWidth="3" /></Icon>
            <Icon x={1160} y={117} w={138} h={66}>
              <path d="M1213.500 136.500h21v21h-21zM1219 136v-6h22v21h-6" stroke="#000" strokeWidth="3" />
            </Icon>
            <Icon x={1298} y={117} w={138} h={66}><path d="M1351 130l29 29M1380 130l-29 29" stroke="#000" strokeWidth="3" /></Icon>
          </WindowButtons>
        </TitleRow>
        <MenuRow>
          <MenuItem $w={55}>Archivo</MenuItem>
          <MenuItem $w={39}>Vista</MenuItem>
          <MenuItem $w={69} $ls={-0.42}>Geometría</MenuItem>
          <MenuItem $w={66} $ls={-0.25}>Utilidades</MenuItem>
          <MenuItem $w={44} $ls={-0.3}>Datos</MenuItem>
          <MenuItem $w={43}>Malla</MenuItem>
          <MenuItem $w={57}>Calcular</MenuItem>
          <MenuItem $w={60}>Ayuda</MenuItem>
        </MenuRow>
        <Toolbar>
          <TopTools />
          <Combo>
            <ComboText><Label>Layer0</Label></ComboText>
            <ComboArrow>
              <Svg width="7" height="4" viewBox="0 0 7 4"><path d="M0 0h7L3.500 4z" fill="#000" /></Svg>
            </ComboArrow>
          </Combo>
          <Spacer />
          <TopRightTools />
        </Toolbar>
        <Work>
          <LeftColumn />
          <RightColumn />
          <Viewport><Scene /></Viewport>
        </Work>
        <LogRow>
          <LogBox>
            <Label $ls={-0.4}>{message}</Label>
            <Label $ls={-0.4}>{message}</Label>
          </LogBox>
          <Icon x={1383} y={36} w={57} h={108}>
            <path d="M1395 61l11-13 11 13zM1395 117h22l-11 13z" fill="#000" />
            <circle cx="1406" cy="90" r="11" fill="#595959" />
          </Icon>
        </LogRow>
        <CommandRow>
          <CommandLabel><Label $ls={-0.45}>Orden:</Label></CommandLabel>
          <CommandInput />
          <Icon x={1266} y={147} w={174} h={69}>
            <path d="M1300 163h42v32h-10v8h-31z" fill="#1c8a26" stroke="#062a08" strokeWidth="3" />
            <path d="M1304 168h12v10h-12z" fill="#c9c9c9" />
            <path d="M1325 182h8M1306 196h18" stroke="#e52a2a" strokeWidth="4" strokeDasharray="4 3" />
            <path d="M1341 158v45" stroke="#333" strokeWidth="4" />
            <rect x="1378" y="159" width="45" height="45" fill="#fff" />
            <path d="M1379 159v45M1391 159v45M1411 159v45M1422 159v45M1378 160h45M1378 170h45M1378 192h45M1378 203h45" stroke="#b8b8b8" strokeWidth="2" />
            <path d="M1401 159v45M1378 181h45" stroke="#000" strokeWidth="3" />
          </Icon>
        </CommandRow>
        <StatusBar>
          <StatusCell $w={265}><Label>Zum: x 1.2</Label></StatusCell>
          <StatusCell $w={454}><Label $ls={-0.35}>Nodos: 0, Elementos: 0</Label></StatusCell>
          <StatusCell $w={374}><Label $ls={-0.25}>Iluminación: flat</Label></StatusCell>
          <StatusCell $w={258}><Label>Capas: 1</Label></StatusCell>
          <StatusCell $w={462}><Label $ls={-0.47}>( -2.114501,  15.10362,  0)</Label></StatusCell>
          <StatusCell $w={106}><Label>Pre</Label></StatusCell>
        </StatusBar>
        <Taskbar>
          <TaskIcons />
          <Spacer />
          <Tray />
          <DesktopEdge />
        </Taskbar>
      </Desktop>
    </>
  );
}
